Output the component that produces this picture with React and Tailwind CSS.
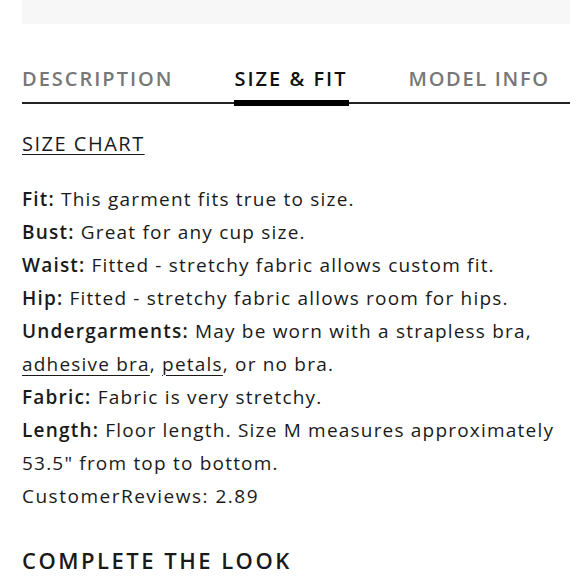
import React from 'react';

const Spec = ({ label, children }) => (
  <p>
    <span className="font-semibold">{label}:</span> {children}
  </p>
);

export default function App() {
  return (
    <div className="w-[580px] h-[580px] overflow-hidden bg-white pl-[22px] pr-[10px] text-[#1a1a1a]" style={{ fontFamily: '"Open Sans", Lato, sans-serif' }}>
      <div className="h-[24px] bg-[#f7f7f7]" />

      {/* tabs */}
      <div className="mt-[45px] flex gap-[61px] border-b-2 border-[#222] text-[20px] font-semibold tracking-[2px] leading-none">
        <div className="pb-[13px] text-[#777]">DESCRIPTION</div>
        <div className="relative pb-[13px] text-[#111]">
          SIZE &amp; FIT
          <div className="absolute left-0 right-[-1px] -bottom-[4px] h-[6px] bg-black" />
        </div>
        <div className="pb-[13px] text-[#777] tracking-[1.7px]">MODEL INFO</div>
      </div>

      <div className="mt-[25px] text-[20px] leading-[30px] tracking-[1.5px]">
        <a className="underline underline-offset-[3px] decoration-1">SIZE CHART</a>
      </div>

      <div className="mt-[24px] text-[19px] leading-[33px] tracking-[1.2px]">
        <Spec label="Fit">This garment fits true to size.</Spec>
        <Spec label="Bust">Great for any cup size.</Spec>
        <Spec label="Waist">Fitted - stretchy fabric allows custom fit.</Spec>
        <Spec label="Hip">Fitted - stretchy fabric allows room for hips.</Spec>
        <Spec label="Undergarments">
          May be worn with a strapless bra,<br />
          <a className="underline underline-offset-[4px] decoration-1">adhesive bra</a>,{' '}
          <a className="underline underline-offset-[4px] decoration-1">petals</a>, or no bra.
        </Spec>
        <Spec label="Fabric">Fabric is very stretchy.</Spec>
        <Spec label="Length">Floor length. Size M measures approximately 53.5" from top to bottom.</Spec>
        <p className="font-medium tracking-[1.5px]">CustomerReviews: 2.89</p>
      </div>

      <h2 className="mt-[31px] text-[22px] font-semibold tracking-[2.5px]">COMPLETE THE LOOK</h2>
    </div>
  );
}
